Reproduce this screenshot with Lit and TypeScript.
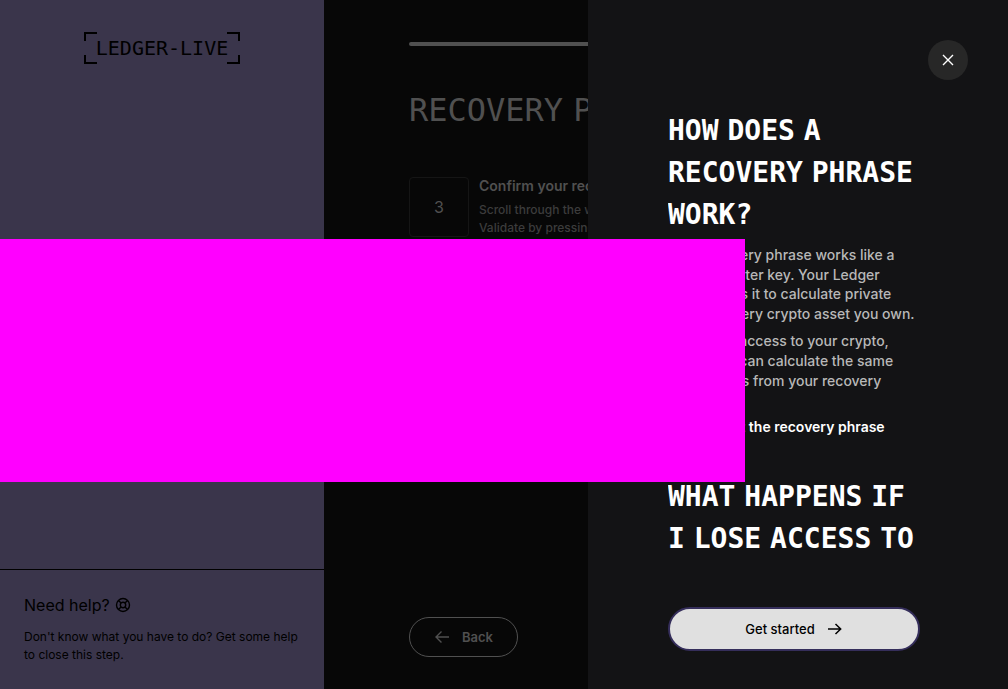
import { LitElement, html, css } from "lit";
import { customElement, property } from "lit/decorators.js";

/** Uppercase heading: monospaced words separated by narrow proportional spaces. */
@customElement("mono-text")
export class MonoText extends LitElement {
  @property() text = "";

  static styles = css`
    :host { display: block; font-family: "DejaVu Sans", sans-serif; font-weight: 400; }
    .word { font-family: "DejaVu Sans Mono", monospace; font-weight: var(--word-weight, 400); line-height: 1; }
  `;

  render() {
    return this.text.split(" ").map((w, i) => html`${i ? " " : ""}<span class="word">${w}</span>`);
  }
}

@customElement("app-root")
export class AppRoot extends LitElement {
  static styles = css`
    :host {
      display: block;
      position: relative;
      height: 100vh;
      overflow: hidden;
      background: #070707;
      font-family: Inter, sans-serif;
      color: #000;
    }
    * { box-sizing: border-box; }
    h1, h2, h3, p { margin: 0; font-weight: 400; }
    button { font-family: inherit; cursor: pointer; }
    svg { display: block; flex: none; fill: none; stroke: currentColor; }

    .page { display: flex; height: 100%; }
    .sidebar {
      flex: 0 0 324px;
      display: flex;
      flex-direction: column;
      justify-content: space-between;
      background: #3a354b;
    }
    .logo {
      align-self: center;
      display: grid;
      grid-template-columns: 13px auto 13px;
      margin-top: 32px;
      height: 32px;
    }
    .logo-name { font: 20px/32px "DejaVu Sans Mono", monospace; margin: 0 -1px; }
    .help { border-top: 1px solid #000; padding: 23px 24px 24px; height: 120px; }
    .help-title { display: flex; align-items: center; gap: 5px; font-size: 16px; line-height: 24px; }
    .help-text { margin-top: 11px; font-size: 12px; line-height: 18px; }

    .main {
      flex: 1;
      min-width: 0;
      display: flex;
      flex-direction: column;
      padding: 42px 85px 32px;
      color: #505050;
    }
    .progress { height: 4px; border-radius: 2px; background: #505050; flex: none; }
    .title { margin-top: 40px; font-size: 32px; line-height: 48px; white-space: nowrap; }
    .step { display: flex; gap: 10px; margin-top: 43px; }
    .step-number {
      flex: none;
      display: grid;
      place-items: center;
      width: 60px;
      height: 60px;
      border: 1px solid #151515;
      border-radius: 4px;
      font-size: 16px;
    }
    .step-title { font-size: 14px; line-height: 18px; font-weight: 600; white-space: nowrap; }
    .step-text { margin-top: 6px; font-size: 12px; line-height: 18px; font-weight: 500; color: #3c3c3c; white-space: nowrap; }
    .back {
      display: flex;
      align-items: center;
      align-self: flex-start;
      gap: 12px;
      height: 40px;
      margin-top: auto;
      padding: 0 24px;
      border: 1px solid #505050;
      border-radius: 20px;
      background: none;
      color: #505050;
      font-size: 13px;
      font-weight: 600;
    }

    .drawer {
      position: absolute;
      inset: 0 0 0 auto;
      width: 420px;
      display: flex;
      flex-direction: column;
      padding: 40px 40px 38px;
      background: #131315;
      color: #fff;
    }
    .close {
      flex: none;
      align-self: flex-end;
      display: grid;
      place-items: center;
      width: 40px;
      height: 40px;
      padding: 0;
      border: 0;
      border-radius: 50%;
      background: #272727;
      color: #fff;
    }
    .content { flex: 1; min-height: 0; overflow: hidden; margin: 30px 48px 38px 40px; }
    .heading { --word-weight: 700; font-size: 28px; line-height: 42px; }
    .copy { margin-top: 8px; font-size: 14px; line-height: 1.4; font-weight: 500; color: #b8b8b8; }
    .heading + .copy { margin-top: 9px; }
    .more { display: block; margin: 7px 0 40px; font-size: 14px; line-height: 1.4; font-weight: 600; color: #fff; text-decoration: none; }
    .start {
      flex: none;
      display: flex;
      align-items: center;
      justify-content: center;
      gap: 12px;
      height: 44px;
      margin: 0 48px 0 40px;
      padding: 0;
      border: 2px solid #352e5b;
      border-radius: 22px;
      background: #e0e0e0;
      color: #000;
      font-size: 13px;
      font-weight: 500;
    }
    .mask { position: absolute; top: 239px; left: 0; width: 745px; height: 243px; background: #f0f; }
  `;

  render() {
    return html`
      <div class="page">
        <aside class="sidebar">
          <div class="logo">
            <svg width="13" height="32" stroke-width="2"><path d="M13 1H1V9M1 23V31H13" /></svg>
            <span class="logo-name">LEDGER-LIVE</span>
            <svg width="13" height="32" stroke-width="2"><path d="M0 1H12V9M12 23V31H0" /></svg>
          </div>
          <section class="help">
            <h3 class="help-title">
              Need help?
              <svg width="16" height="16" viewBox="0 0 16 16" stroke-width="1.4">
                <circle cx="8" cy="8" r="6.5" /><circle cx="8" cy="8" r="2.7" />
                <path d="M3.4 3.4 6.1 6.1M12.6 3.4 9.9 6.1M3.4 12.6 6.1 9.9M12.6 12.6 9.9 9.9" />
              </svg>
            </h3>
            <p class="help-text">Don't know what you have to do? Get some help to close this step.</p>
          </section>
        </aside>
        <main class="main">
          <div class="progress"></div>
          <h1 class="title"><mono-text text="RECOVERY PHRASE"></mono-text></h1>
          <div class="step">
            <div class="step-number">3</div>
            <div>
              <h3 class="step-title">Confirm your recovery phrase</h3>
              <p class="step-text">Scroll through the words.<br />Validate by pressing both buttons.</p>
            </div>
          </div>
          <button class="back">
            <svg width="16" height="16" viewBox="0 0 16 16" stroke-width="1.4"><path d="M15 8H2M7.5 2.5 2 8l5.5 5.5" /></svg>
            Back
          </button>
        </main>
      </div>
      <aside class="drawer">
        <button class="close" aria-label="Close">
          <svg width="12" height="12" viewBox="0 0 12 12" stroke-width="1.4"><path d="M1 1 11 11M11 1 1 11" /></svg>
        </button>
        <div class="content">
          <h2 class="heading"><mono-text text="HOW DOES A RECOVERY PHRASE WORK?"></mono-text></h2>
          <p class="copy">Your recovery phrase works like a unique master key. Your Ledger device uses it to calculate private keys for every crypto asset you own.</p>
          <p class="copy">To restore access to your crypto, any&nbsp;wallet can calculate the same private keys from your recovery phrase.</p>
          <a class="more" href="#recovery">More about the recovery phrase</a>
          <h2 class="heading"><mono-text text="WHAT HAPPENS IF I LOSE ACCESS TO"></mono-text></h2>
        </div>
        <button class="start">
          Get started
          <svg width="16" height="16" viewBox="0 0 16 16" stroke-width="1.5"><path d="M1 8H14M8.5 3 13.7 8l-5.2 5" /></svg>
        </button>
      </aside>
      <div class="mask"></div>
    `;
  }
}
